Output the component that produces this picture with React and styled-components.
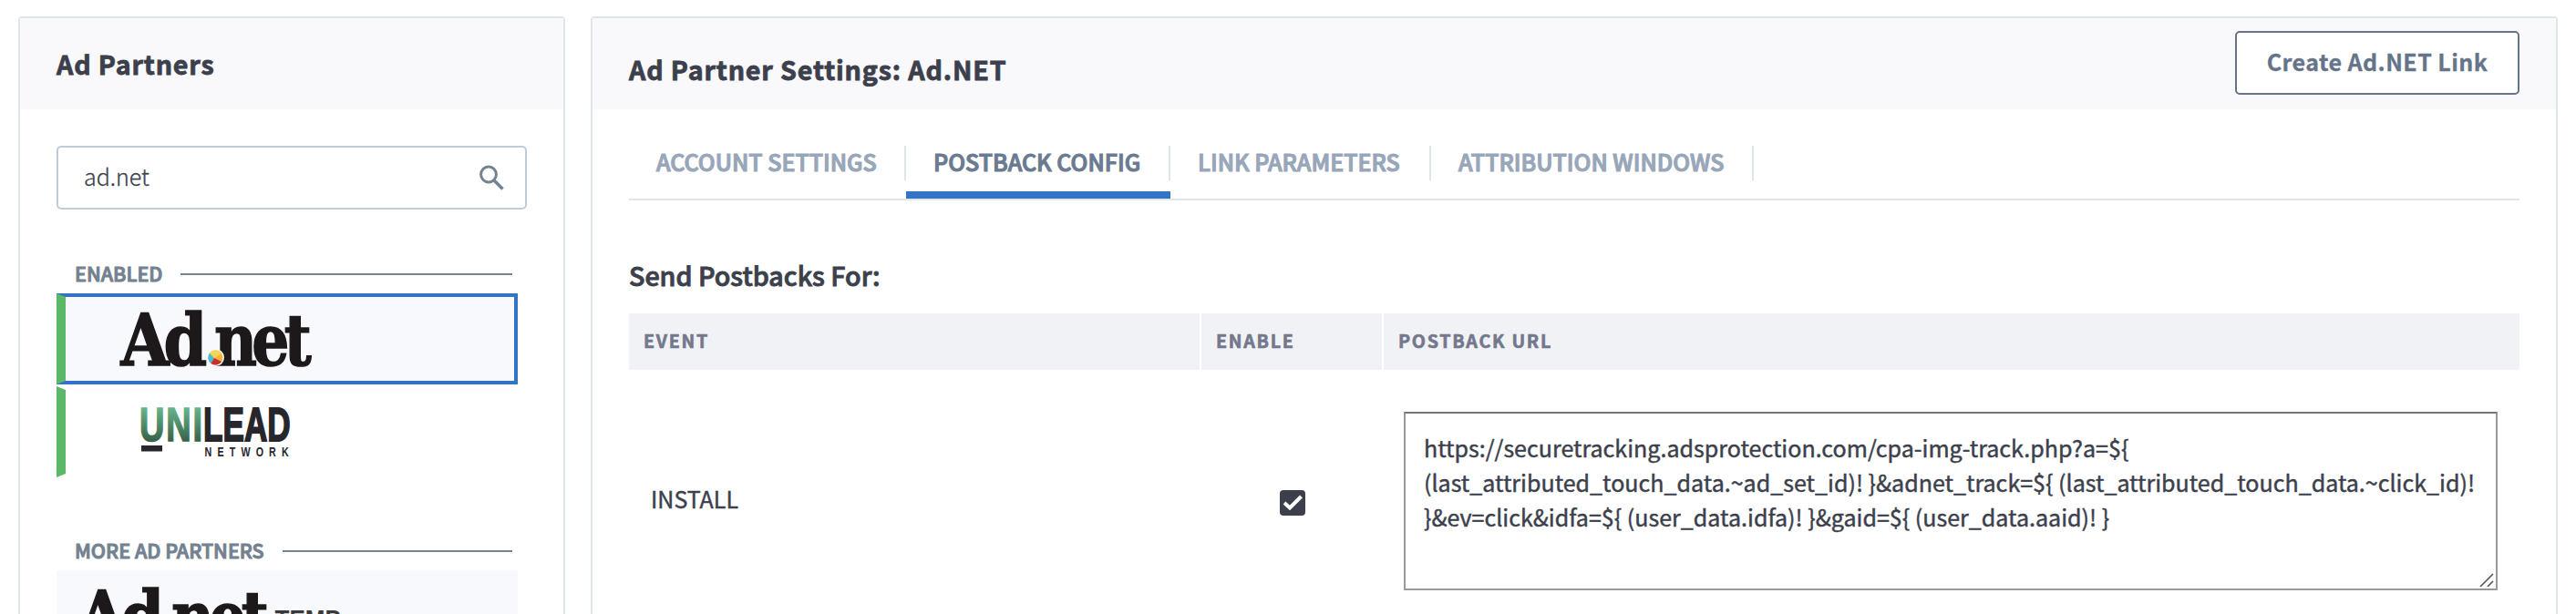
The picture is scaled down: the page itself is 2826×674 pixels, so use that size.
import React from "react";
import styled, { createGlobalStyle } from "styled-components";

const GlobalStyle = createGlobalStyle`
  * { box-sizing: border-box; }
  body {
    margin: 0;
    background: #fff;
    color: #3c3f4c;
    font-family: "Noto Sans CJK SC", "Noto Sans", sans-serif;
    overflow: hidden;
  }
`;

const Page = styled.div`
  display: flex;
  gap: 28px;
  height: 674px;
  padding: 18px 20px 0;
  overflow: hidden;
`;

const Panel = styled.section`
  flex: ${(p) => (p.$width ? `0 0 ${p.$width}px` : "1")};
  height: 700px;
  background: #fff;
  border: 2px solid #e0e5ea;
  border-radius: 4px;
`;

const PanelHeader = styled.header`
  display: flex;
  justify-content: space-between;
  height: 100px;
  padding: 14px 40px 0;
  background: #f9f9fb;
`;

const Title = styled.h1`
  margin: ${(p) => p.$top}px 0 0;
  font-size: 28.65px;
  line-height: 40px;
  font-weight: 700;
  letter-spacing: 0.85px;
  -webkit-text-stroke: 0.8px currentColor;
  white-space: nowrap;
`;

const LinkButton = styled.button`
  width: 312px;
  height: 70px;
  padding: 0 0 4px;
  background: #fff;
  border: 2px solid #657489;
  border-radius: 5px;
  color: #657489;
  font-family: inherit;
  font-size: 25px;
  line-height: 38px;
  font-weight: 700;
  letter-spacing: 0.45px;
  -webkit-text-stroke: 0.3px currentColor;
  white-space: nowrap;
`;

const SideBody = styled.div`
  padding: 40px 40px 0;
`;

const SearchBox = styled.div`
  display: flex;
  align-items: center;
  justify-content: space-between;
  width: 516px;
  height: 70px;
  padding: 0 23px 0 28px;
  border: 2px solid #c2ccd7;
  border-radius: 5px;
`;

const SearchText = styled.span`
  padding-bottom: 4px;
  font-size: 25px;
  line-height: 38px;
  font-weight: 300;
  -webkit-text-stroke: 0.3px currentColor;
`;

const Group = styled.div`
  width: 506px;
  margin-top: ${(p) => p.$top}px;
`;

const GroupLabel = styled.div`
  display: flex;
  align-items: center;
  gap: 20px;
  height: 42px;
  padding: 0 6px 0 20px;
  color: #738191;
  font-size: 21.5px;
  line-height: 30px;
  font-weight: 500;
  -webkit-text-stroke: 1px currentColor;
  white-space: nowrap;

  span { padding-bottom: 3px; }
  &::after { content: ""; flex: 1; height: 2px; background: #738191; }
`;

const Partner = styled.div`
  height: 100px;
  margin-bottom: 2px;
  border-style: solid;
  border-width: 4px 4px 4px 10px;
  border-color: ${(p) => (p.$selected ? "#3375c4" : "transparent")};
  border-left-color: ${(p) => (p.$enabled ? "#5ab866" : "transparent")};
  background: ${(p) => (p.$tinted ? "#f8f9fd" : "#fff")};
  padding: ${(p) => p.$top}px 0 0 ${(p) => p.$inset}px;

  svg { display: block; overflow: visible; }
`;

const MainBody = styled.div`
  padding: 40px 40px 0;
`;

const Tabs = styled.nav`
  display: flex;
  height: 60px;
  border-bottom: 2px solid #e0e5ea;
`;

const Tab = styled.div`
  width: ${(p) => p.$width}px;
  height: 58px;
  border-bottom: 8px solid ${(p) => (p.$active ? "#3375c4" : "transparent")};
  color: ${(p) => (p.$active ? "#6a7b91" : "#98a6b9")};
`;

const TabLabel = styled.div`
  height: 38px;
  padding: 0 0 4px 30px;
  border-right: 2px solid #e0e5ea;
  font-size: 25px;
  line-height: 34px;
  font-weight: 500;
  -webkit-text-stroke: 1.1px currentColor;
  white-space: nowrap;
`;

const SectionTitle = styled.h2`
  margin: 62px 0 22px;
  font-size: 28.65px;
  line-height: 40px;
  font-weight: 500;
  -webkit-text-stroke: 0.9px currentColor;
`;

const TableRow = styled.div`
  display: grid;
  grid-template-columns: 626px 198px 1fr;
  column-gap: 2px;
`;

const HeadCell = styled.div`
  height: 62px;
  padding: 0 0 3px 16px;
  background: #f1f2f6;
  color: #73788c;
  font-size: 19.7px;
  line-height: 59px;
  font-weight: 700;
  letter-spacing: 1.7px;
  -webkit-text-stroke: 0.6px currentColor;
`;

const EventCell = styled.div`
  padding: 122px 0 0 24px;
  font-size: 25px;
  line-height: 38px;
  -webkit-text-stroke: 0.45px currentColor;
`;

const EnableCell = styled.div`
  padding: 132px 0 0 86px;
`;

const Check = styled.div`
  width: 28px;
  height: 28px;
  border-radius: 4px;
  background: #3c3f4c;
  svg { display: block; }
`;

const UrlCell = styled.div`
  padding: 46px 24px 0 22px;
`;

const UrlBox = styled.div`
  position: relative;
  height: 196px;
  padding: 18px 20px;
  border: 2px solid #999;
  border-top-color: #757575;
  font-size: 25.06px;
  line-height: 38px;
  -webkit-text-stroke: 0.45px currentColor;
  white-space: pre;
`;

const Grip = styled.svg`
  position: absolute;
  right: 2px;
  bottom: 1px;
`;

const Wordmark = styled.text`
  font-family: "DejaVu Serif", serif;
  font-size: 79px;
  font-weight: 700;
  fill: #1d1819;
  stroke: #1d1819;
  stroke-width: 1.6px;
`;

const Gothic = styled.text`
  font-family: "Liberation Sans", sans-serif;
  font-size: ${(p) => p.$size}px;
  font-weight: 700;
  letter-spacing: ${(p) => p.$spacing || 0}px;
`;

function AdnetLogo({ suffix }) {
  return (
    <svg width="300" height="62" viewBox="0 0 300 62">
      <Wordmark transform="translate(0.500 58.500) scale(0.865 1)" letterSpacing="-7">Ad</Wordmark>
      <Wordmark transform="translate(103 58.500) scale(0.82 1)" letterSpacing="-7">net</Wordmark>
      <circle cx="104.5" cy="50.5" r="9.5" fill="#f8f9fd" />
      <circle cx="104.5" cy="50.5" r="8" fill="#f4b53f" />
      <path d="M98 45.500A8 8 0 0 0 99.500 57L103 51Z" fill="#4db8dd" />
      <path d="M99.500 57A8 8 0 0 0 111 55L103 51Z" fill="#c5302c" />
      <path d="M98 45.500A8 8 0 0 1 111 46L103 51Z" fill="#f6d458" />
      {suffix && (
        <Gothic $size={29} transform="translate(216.500 43.500) scale(0.9 1)" fill="#3a3a3a">{suffix}</Gothic>
      )}
    </svg>
  );
}

function UnileadLogo() {
  return (
    <svg width="170" height="60" viewBox="0 0 170 60">
      <defs>
        <linearGradient id="leaf" x1="0" y1="-36" x2="0" y2="0" gradientUnits="userSpaceOnUse">
          <stop offset="0" stopColor="#68b58c" />
          <stop offset="1" stopColor="#38644a" />
        </linearGradient>
      </defs>
      <Gothic $size={51} $spacing={2.5} transform="translate(-2 35.500) scale(0.745 1)" fill="url(#leaf)" stroke="url(#leaf)" strokeWidth="1.6">UNI</Gothic>
      <Gothic $size={51} transform="translate(68 35.500) scale(0.69 1)" fill="#26262b" stroke="#26262b" strokeWidth="1.8">LEAD</Gothic>
      <rect x="0" y="41" width="23" height="6.500" fill="#26262b" />
      <Gothic $size={14.3} $spacing={8.2} transform="translate(69.500 52.500) scale(0.75 1)" fill="#26262b">NETWORK</Gothic>
    </svg>
  );
}

const SearchIcon = () => (
  <svg width="27" height="28" viewBox="0 0 27 28" fill="none" stroke="#738293">
    <circle cx="10" cy="10.500" r="8.400" strokeWidth="3" />
    <path d="M16 17L25.500 26.500" strokeWidth="3.600" />
  </svg>
);

const TABS = [
  { label: "ACCOUNT SETTINGS", width: 304 },
  { label: "POSTBACK CONFIG", width: 290, active: true },
  { label: "LINK PARAMETERS", width: 286 },
  { label: "ATTRIBUTION WINDOWS", width: 354 },
];

const POSTBACK_URL = [
  "https://securetracking.adsprotection.com/cpa-img-track.php?a=${",
  "(last_attributed_touch_data.~ad_set_id)! }&adnet_track=${ (last_attributed_touch_data.~click_id)!",
  "}&ev=click&idfa=${ (user_data.idfa)! }&gaid=${ (user_data.aaid)! }",
].join("\n");

export default function App() {
  return (
    <>
      <GlobalStyle />
      <Page>
        <Panel $width={600}>
          <PanelHeader>
            <Title $top={16}>Ad Partners</Title>
          </PanelHeader>
          <SideBody>
            <SearchBox>
              <SearchText>ad.net</SearchText>
              <SearchIcon />
            </SearchBox>
            <Group $top={50}>
              <GroupLabel><span>ENABLED</span></GroupLabel>
              <Partner $enabled $selected $tinted $top={16} $inset={60}>
                <AdnetLogo />
              </Partner>
              <Partner $enabled $top={20} $inset={83}>
                <UnileadLogo />
              </Partner>
            </Group>
            <Group $top={60}>
              <GroupLabel><span>MORE AD PARTNERS</span></GroupLabel>
              <Partner $tinted $top={16} $inset={13}>
                <AdnetLogo suffix="TEMP" />
              </Partner>
            </Group>
          </SideBody>
        </Panel>
        <Panel>
          <PanelHeader>
            <Title $top={22}>Ad Partner Settings: Ad.NET</Title>
            <LinkButton>Create Ad.NET Link</LinkButton>
          </PanelHeader>
          <MainBody>
            <Tabs>
              {TABS.map((t) => (
                <Tab key={t.label} $width={t.width} $active={t.active}>
                  <TabLabel>{t.label}</TabLabel>
                </Tab>
              ))}
            </Tabs>
            <SectionTitle>Send Postbacks For:</SectionTitle>
            <TableRow>
              <HeadCell>EVENT</HeadCell>
              <HeadCell>ENABLE</HeadCell>
              <HeadCell>POSTBACK URL</HeadCell>
            </TableRow>
            <TableRow>
              <EventCell>INSTALL</EventCell>
              <EnableCell>
                <Check>
                  <svg width="28" height="28" viewBox="0 0 28 28" fill="none" stroke="#fff" strokeWidth="4">
                    <path d="M5 14L11 19.500L23.500 7" />
                  </svg>
                </Check>
              </EnableCell>
              <UrlCell>
                <UrlBox>
                  {POSTBACK_URL}
                  <Grip width="16" height="16" viewBox="0 0 16 16" stroke="#555" strokeWidth="1.600">
                    <path d="M1 15L15 1M9 15L15 9" />
                  </Grip>
                </UrlBox>
              </UrlCell>
            </TableRow>
          </MainBody>
        </Panel>
      </Page>
    </>
  );
}
